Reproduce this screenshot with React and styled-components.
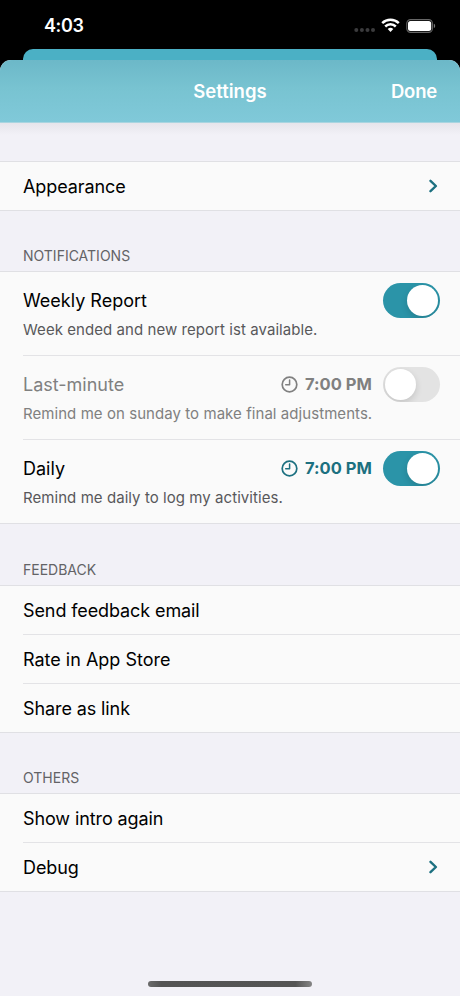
import React, { useState } from 'react';
import styled, { createGlobalStyle } from 'styled-components';

const GlobalStyle = createGlobalStyle`
  * {
    box-sizing: border-box;
  }
  body {
    margin: 0;
    background: #000;
    font-family: Inter, 'Liberation Sans', sans-serif;
  }
`;

const Screen = styled.div`
  display: flex;
  flex-direction: column;
  width: 460px;
  height: 996px;
  background: #000;
  overflow: hidden;
`;

const StatusBar = styled.div`
  display: flex;
  align-items: center;
  justify-content: space-between;
  height: 49px;
  padding: 2px 24px 0 44px;
`;

const Time = styled.div`
  color: #fff;
  font-size: 18px;
  font-weight: 600;
  letter-spacing: -0.4px;
`;

const StatusIcons = styled.div`
  display: flex;
  align-items: center;
`;

const BackCard = styled.div`
  height: 11px;
  margin: 0 23px;
  border-radius: 10px 10px 0 0;
  background: #4bb0c5;
`;

const Sheet = styled.div`
  flex: 1;
  display: flex;
  flex-direction: column;
  border-radius: 11px 11px 0 0;
  overflow: hidden;
  background: #f2f1f7;
`;

const NavBar = styled.div`
  display: grid;
  grid-template-columns: 1fr auto 1fr;
  align-items: center;
  height: 63px;
  padding: 0 23px;
  color: #fff;
  font-size: 18.5px;
  font-weight: 600;
  background: linear-gradient(#6cb8c8, #78c3d1 45%, #80c9d9);
  border-bottom: 1px solid #a9d5e0;
`;

const NavTitle = styled.div`
  grid-column: 2;
  letter-spacing: 0;
`;

const DoneButton = styled.button`
  justify-self: end;
  padding: 0;
  border: none;
  background: none;
  color: inherit;
  font: inherit;
  letter-spacing: -0.2px;
  cursor: pointer;
`;

const Content = styled.div`
  flex: 1;
  background: linear-gradient(#e6e5eb, #f2f1f7 12px);
`;

const SectionHeader = styled.div`
  display: flex;
  align-items: flex-end;
  height: ${(props) => props.$height}px;
  padding: 0 23px 6px;
  color: #636366;
  font-size: 14px;
  line-height: 18px;
  letter-spacing: 0;
`;

const Group = styled.div`
  background: #fafafa;
  border-top: 1px solid #e0e0e4;
  border-bottom: 1px solid #e0e0e4;
`;

const Row = styled.div`
  display: flex;
  align-items: center;
  justify-content: space-between;
  height: 48px;
  margin-left: 23px;
  padding-right: 22px;
  color: #000;
  font-size: 18px;

  & + & {
    height: 49px;
    border-top: 1px solid #e3e3e6;
  }
`;

const Label = styled.span`
  letter-spacing: ${(props) => props.$tracking ?? -0.1}px;
`;

const ToggleRow = styled.div`
  height: 83px;
  margin-left: 23px;
  padding: 10px 20px 0 0;
  color: ${(props) => (props.$on ? '#000' : '#808080')};

  & + & {
    height: 84px;
    border-top: 1px solid #e3e3e6;
  }
`;

const ToggleTop = styled.div`
  display: flex;
  align-items: center;
  height: 36px;
  font-size: 18px;
`;

const TimeButton = styled.button`
  display: flex;
  align-items: center;
  gap: 7px;
  margin-left: auto;
  padding: 0;
  border: none;
  background: none;
  color: ${(props) => (props.$on ? '#1c7080' : '#808080')};
  font: inherit;
  font-size: 16.5px;
  font-weight: 650;
  letter-spacing: 0.05px;
`;

const Description = styled.div`
  margin-top: 2px;
  color: ${(props) => (props.$on ? '#58585a' : '#808080')};
  font-size: 15px;
  line-height: 20px;
  white-space: nowrap;
  letter-spacing: 0.06px;
`;

const Switch = styled.button`
  display: flex;
  justify-content: ${(props) => (props.$on ? 'flex-end' : 'flex-start')};
  width: 57px;
  height: 35px;
  margin-left: ${(props) => (props.$alone ? 'auto' : '11px')};
  padding: 2px;
  border: none;
  border-radius: 18px;
  background: ${(props) => (props.$on ? '#2b94a8' : '#e3e3e3')};
  overflow: hidden;
  cursor: pointer;
`;

const Knob = styled.span`
  width: 31px;
  height: 31px;
  border-radius: 50%;
  background: #fff;
  box-shadow: 0 3px 7px rgba(0, 0, 0, 0.14);
`;

const HomeIndicator = styled.div`
  width: 164px;
  height: 6px;
  margin: 0 auto 9px;
  border-radius: 3px;
  background: linear-gradient(90deg, #6b6b6b, #545454 8%, #555 90%, #858585);
`;

const DotsIcon = styled.svg`
  margin-top: 9px;
`;

const WifiIcon = styled.svg`
  margin-left: 5px;
`;

const BatteryIcon = styled.svg`
  margin-left: 6px;
`;

const Dots = () => (
  <DotsIcon width="22" height="5" viewBox="0 0 22 5" fill="#3b3b3d">
    <circle cx="2.3" cy="2" r="2" />
    <circle cx="7.9" cy="2" r="2" />
    <circle cx="13.5" cy="2" r="2" />
    <circle cx="19" cy="2" r="2" />
  </DotsIcon>
);

const Wifi = () => (
  <WifiIcon width="19" height="15" viewBox="0 0 19 15" fill="none" stroke="#fff" strokeWidth="2.5">
    <path d="M1.2 5.2a12 12 0 0 1 16.6 0" />
    <path d="M4.2 8.5a7.6 7.6 0 0 1 10.6 0" />
    <path d="M9.5 13.9 6.7 11a4.1 4.1 0 0 1 5.6 0z" fill="#fff" stroke="none" />
  </WifiIcon>
);

const Battery = () => (
  <BatteryIcon width="30" height="14" viewBox="0 0 30 14">
    <rect x="0.8" y="0.6" width="25.6" height="12.8" rx="3.8" fill="none" stroke="#666" strokeWidth="1.1" />
    <rect x="2" y="1.9" width="23.2" height="10.2" rx="2.5" fill="#fff" />
    <path d="M27.8 4.8c1.8.5 1.8 3.9 0 4.4z" fill="#777" />
  </BatteryIcon>
);

const Chevron = () => (
  <svg width="9" height="14" viewBox="0 0 9 14" fill="none" stroke="#1c7080" strokeWidth="2.4">
    <path d="M1.5 1.8 6.9 7l-5.4 5.2" strokeLinecap="round" strokeLinejoin="round" />
  </svg>
);

const Clock = () => (
  <svg width="17" height="17" viewBox="0 0 17 17" fill="none" stroke="currentColor" strokeWidth="1.7">
    <circle cx="8.5" cy="8.5" r="7.3" />
    <path d="M8.6 3.9v4.9H4.7" strokeWidth="1.5" strokeLinecap="round" strokeLinejoin="round" />
  </svg>
);

const reminders = [
  { id: 'weekly', name: 'Weekly Report', text: 'Week ended and new report ist available.' },
  { id: 'last', name: 'Last-minute', text: 'Remind me on sunday to make final adjustments.', time: '7:00 PM' },
  { id: 'daily', name: 'Daily', text: 'Remind me daily to log my activities.', time: '7:00 PM' },
];

function App() {
  const [enabled, setEnabled] = useState({ weekly: true, last: false, daily: true });

  const toggle = (id) => setEnabled({ ...enabled, [id]: !enabled[id] });

  return (
    <Screen>
      <GlobalStyle />
      <StatusBar>
        <Time>4:03</Time>
        <StatusIcons>
          <Dots />
          <Wifi />
          <Battery />
        </StatusIcons>
      </StatusBar>
      <BackCard />
      <Sheet>
        <NavBar>
          <NavTitle>Settings</NavTitle>
          <DoneButton>Done</DoneButton>
        </NavBar>
        <Content>
          <SectionHeader $height={38} />
          <Group>
            <Row>
              <Label>Appearance</Label>
              <Chevron />
            </Row>
          </Group>
          <SectionHeader $height={60}>NOTIFICATIONS</SectionHeader>
          <Group>
            {reminders.map((item) => (
              <ToggleRow key={item.id} $on={enabled[item.id]}>
                <ToggleTop>
                  <Label $tracking={0}>{item.name}</Label>
                  {item.time && (
                    <TimeButton $on={enabled[item.id]}>
                      <Clock />
                      {item.time}
                    </TimeButton>
                  )}
                  <Switch
                    $on={enabled[item.id]}
                    $alone={!item.time}
                    aria-label={item.name}
                    onClick={() => toggle(item.id)}
                  >
                    <Knob />
                  </Switch>
                </ToggleTop>
                <Description $on={enabled[item.id]}>{item.text}</Description>
              </ToggleRow>
            ))}
          </Group>
          <SectionHeader $height={61}>FEEDBACK</SectionHeader>
          <Group>
            <Row>
              <Label>Send feedback email</Label>
            </Row>
            <Row>
              <Label $tracking={0}>Rate in App Store</Label>
            </Row>
            <Row>
              <Label>Share as link</Label>
            </Row>
          </Group>
          <SectionHeader $height={60}>OTHERS</SectionHeader>
          <Group>
            <Row>
              <Label>Show intro again</Label>
            </Row>
            <Row>
              <Label>Debug</Label>
              <Chevron />
            </Row>
          </Group>
        </Content>
        <HomeIndicator />
      </Sheet>
    </Screen>
  );
}

export default App;
